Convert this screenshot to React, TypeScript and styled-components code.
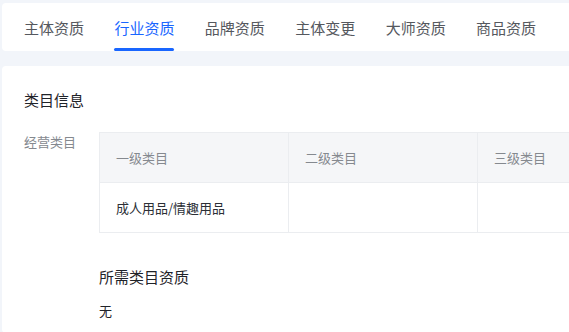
import styled, { createGlobalStyle, css } from 'styled-components';

const GlobalStyle = createGlobalStyle`
  html, body {
    margin: 0;
    padding: 0;
    background: #f2f5fa;
    overflow: hidden;
  }

  body {
    font-family: "Noto Sans CJK SC", "Noto Sans", sans-serif;
  }
`;

const tabs = ['主体资质', '行业资质', '品牌资质', '主体变更', '大师资质', '商品资质'];

const columns = ['一级类目', '二级类目', '三级类目'];
const rows = [['成人用品/情趣用品', '', '']];

const App = () => (
  <>
    <GlobalStyle />
    <StyledPage>
      <StyledTabBar>
        {tabs.map((tab) => (
          <StyledTab key={tab} $active={tab === '行业资质'}>
            {tab}
          </StyledTab>
        ))}
      </StyledTabBar>

      <StyledCard>
        <StyledSectionTitle>类目信息</StyledSectionTitle>
        <StyledField>
          <StyledLabel>经营类目</StyledLabel>
          <StyledFieldBody>
            <StyledTable>
              <thead>
                <tr>
                  {columns.map((col) => (
                    <StyledHeadCell key={col}>{col}</StyledHeadCell>
                  ))}
                </tr>
              </thead>
              <tbody>
                {rows.map((row, i) => (
                  <tr key={i}>
                    {row.map((cell, j) => (
                      <StyledCell key={j}>{cell}</StyledCell>
                    ))}
                  </tr>
                ))}
              </tbody>
            </StyledTable>
            <StyledSubTitle>所需类目资质</StyledSubTitle>
            <StyledValue>无</StyledValue>
          </StyledFieldBody>
        </StyledField>
      </StyledCard>
    </StyledPage>
  </>
);

export default App;

const StyledPage = styled.div`
  height: 332px;
  padding: 3px 0 0 2px;
  box-sizing: border-box;
  overflow: hidden;
`;

const StyledTabBar = styled.div`
  display: flex;
  align-items: stretch;
  gap: 30.4px;
  height: 48px;
  padding: 0 22px;
  background: #ffffff;
  border-radius: 4px 0 0 4px;
`;

const StyledTab = styled.div<{ $active?: boolean }>`
  position: relative;
  display: flex;
  align-items: center;
  padding-top: 1px;
  color: #55585e;
  font-size: 15px;
  line-height: 22px;
  white-space: nowrap;

  ${({ $active }) =>
    $active &&
    css`
      color: #1966ff;

      &::after {
        content: '';
        position: absolute;
        left: 0;
        right: 0;
        bottom: 0;
        height: 3px;
        border-radius: 2px;
        background: #1966ff;
      }
    `}
`;

const StyledCard = styled.div`
  margin-top: 15px;
  padding: 23px 0 12px 22px;
  background: #ffffff;
  border-radius: 4px 0 0 4px;
  overflow: hidden;
`;

const StyledSectionTitle = styled.div`
  color: #1f2329;
  font-size: 15px;
  font-weight: 400;
  line-height: 22px;
`;

const StyledField = styled.div`
  display: flex;
  margin-top: 21px;
`;

const StyledLabel = styled.div`
  flex: 0 0 75px;
  color: #85898f;
  font-size: 13px;
  line-height: 20px;
`;

const StyledFieldBody = styled.div`
  display: flex;
  flex-direction: column;
`;

const StyledTable = styled.table`
  border-collapse: collapse;
  table-layout: fixed;
  width: 568px;
  border: 1px solid #ebedf0;
`;

const cellStyle = css`
  width: 189px;
  height: 50px;
  padding: 0 16px;
  border: 1px solid #ebedf0;
  font-size: 13px;
  font-weight: 400;
  line-height: 20px;
  text-align: left;
  box-sizing: border-box;
`;

const StyledHeadCell = styled.th`
  ${cellStyle}
  background: #f5f6f8;
  color: #85898f;
`;

const StyledCell = styled.td`
  ${cellStyle}
  background: #ffffff;
  color: #2b2f36;
`;

const StyledSubTitle = styled.div`
  margin-top: 33px;
  color: #1f2329;
  font-size: 15px;
  line-height: 22px;
`;

const StyledValue = styled.div`
  margin-top: 13px;
  color: #1f2329;
  font-size: 13px;
  line-height: 20px;
`;
